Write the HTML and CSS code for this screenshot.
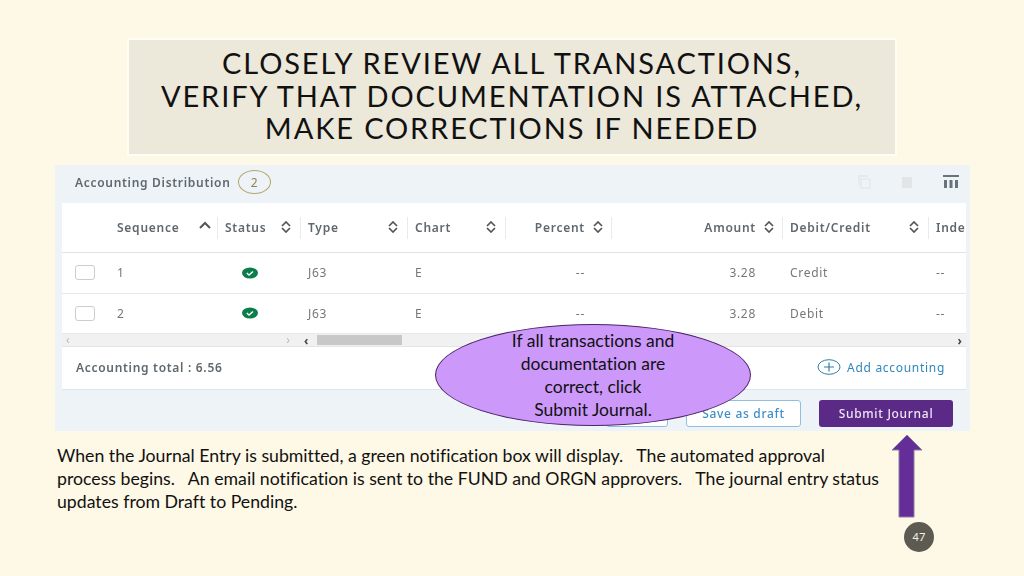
FILE: index.html
```html
<!DOCTYPE html>
<html lang="en">

<head>
	<meta charset="utf-8" />
	<title>Closely review all transactions</title>
	<link rel="stylesheet" href="styles.css">
</head>

<body>
	<div class="slide">
		<div class="title">
			<div>CLOSELY REVIEW ALL TRANSACTIONS,</div>
			<div>VERIFY THAT DOCUMENTATION IS ATTACHED,</div>
			<div>MAKE CORRECTIONS IF NEEDED</div>
		</div>

		<div class="panel">
			<div class="panel-head">
				<span class="panel-title">Accounting Distribution</span>
				<span class="count">2</span>
				<div class="tools">
					<svg width="16" height="16" viewBox="0 0 16 16" fill="none" stroke="#e3e7ea" stroke-width="1.4"><rect x="5" y="5" width="9" height="9"/><path d="M3 11V2h9"/></svg>
					<svg width="16" height="16" viewBox="0 0 16 16" fill="#e1e5e8"><rect x="3" y="3" width="10" height="11"/></svg>
					<svg width="18" height="16" viewBox="0 0 18 16" fill="#68737b"><rect x="1" y="1" width="16" height="2"/><rect x="2" y="6" width="3" height="8"/><rect x="7.5" y="6" width="3" height="8"/><rect x="13" y="6" width="3" height="8"/></svg>
				</div>
			</div>

			<div class="card">
				<div class="row row-head">
					<div class="cell"><span class="lbl seq">Sequence</span>
						<svg class="sort up" width="12" height="8" viewBox="0 0 12 8" fill="none" stroke="#555" stroke-width="2"><path d="M1 7l5-5 5 5"/></svg>
					</div>
					<div class="cell sep"><span class="lbl">Status</span><svg class="sort" width="12" height="12" viewBox="0 0 12 12" fill="none" stroke="#555" stroke-width="1.7"><path d="M2 5l4-4 4 4M2 7l4 4 4-4"/></svg></div>
					<div class="cell sep"><span class="lbl">Type</span><svg class="sort" width="12" height="12" viewBox="0 0 12 12" fill="none" stroke="#555" stroke-width="1.7"><path d="M2 5l4-4 4 4M2 7l4 4 4-4"/></svg></div>
					<div class="cell sep"><span class="lbl">Chart</span><svg class="sort" width="12" height="12" viewBox="0 0 12 12" fill="none" stroke="#555" stroke-width="1.7"><path d="M2 5l4-4 4 4M2 7l4 4 4-4"/></svg></div>
					<div class="cell sep end"><span class="lbl">Percent</span><svg class="sort near" width="12" height="12" viewBox="0 0 12 12" fill="none" stroke="#555" stroke-width="1.7"><path d="M2 5l4-4 4 4M2 7l4 4 4-4"/></svg></div>
					<div class="cell sep end"><span class="lbl">Amount</span><svg class="sort near" width="12" height="12" viewBox="0 0 12 12" fill="none" stroke="#555" stroke-width="1.7"><path d="M2 5l4-4 4 4M2 7l4 4 4-4"/></svg></div>
					<div class="cell sep"><span class="lbl">Debit/Credit</span><svg class="sort" width="12" height="12" viewBox="0 0 12 12" fill="none" stroke="#555" stroke-width="1.7"><path d="M2 5l4-4 4 4M2 7l4 4 4-4"/></svg></div>
					<div class="cell sep clip"><span class="lbl">Inde</span></div>
				</div>

				<div class="row row-body">
					<div class="cell"><span class="check"></span><span class="seq-num">1</span></div>
					<div class="cell center"><svg width="16" height="12" viewBox="0 0 16 12"><ellipse cx="8" cy="6" rx="8" ry="5.5" fill="#0b7d4b"/><path d="M4.8 6l2.2 2 4-3.6" fill="none" stroke="#fff" stroke-width="1.4"/></svg></div>
					<div class="cell">J63</div>
					<div class="cell">E</div>
					<div class="cell dash-pct">--</div>
					<div class="cell amount">3.28</div>
					<div class="cell">Credit</div>
					<div class="cell">--</div>
				</div>
				<div class="row row-body">
					<div class="cell"><span class="check"></span><span class="seq-num">2</span></div>
					<div class="cell center"><svg width="16" height="12" viewBox="0 0 16 12"><ellipse cx="8" cy="6" rx="8" ry="5.5" fill="#0b7d4b"/><path d="M4.8 6l2.2 2 4-3.6" fill="none" stroke="#fff" stroke-width="1.4"/></svg></div>
					<div class="cell">J63</div>
					<div class="cell">E</div>
					<div class="cell dash-pct">--</div>
					<div class="cell amount">3.28</div>
					<div class="cell">Debit</div>
					<div class="cell">--</div>
				</div>

				<div class="scroll">
					<div class="scroll-left">
						<span class="arrow faint">&lsaquo;</span>
						<span class="arrow faint">&rsaquo;</span>
					</div>
					<div class="scroll-right">
						<span class="arrow">&lsaquo;</span>
						<span class="thumb"></span>
						<span class="arrow end-arrow">&rsaquo;</span>
					</div>
				</div>

				<div class="card-foot">
					<span class="total">Accounting total : 6.56</span>
					<span class="add">
						<svg width="24" height="16" viewBox="0 0 24 16" fill="none" stroke="#2f7fa8" stroke-width="1"><ellipse cx="12" cy="8" rx="11" ry="7.3"/><path d="M12 3.5v9M7 8h10" stroke-width="1.2"/></svg>
						Add accounting
					</span>
				</div>
			</div>

			<div class="actions">
				<button class="btn btn-hidden"></button>
				<button class="btn">Save as draft</button>
				<button class="btn btn-primary">Submit Journal</button>
			</div>
		</div>

		<p class="note">When the Journal Entry is submitted, a green notification box will display.&nbsp;&nbsp; The automated approval<br>process begins.&nbsp;&nbsp; An email notification is sent to the FUND and ORGN approvers.&nbsp;&nbsp; The journal entry status<br>updates from Draft to Pending.</p>

		<div class="oval">If all transactions and<br>documentation are<br>correct, click<br>Submit Journal.</div>

		<svg class="up-arrow" width="34" height="84" viewBox="0 0 34 84"><path d="M17 1L32 16H24V83H9V16H2z" fill="#652d98" stroke="#8a7fa0" stroke-width="1"/></svg>

		<div class="page-num">47</div>
	</div>
</body>

</html>
```

FILE: styles.css
```css
body {
	margin: 0;
	background: #fef8e6;
}

.slide {
	position: relative;
	width: 1024px;
	height: 576px;
	overflow: hidden;
	padding-top: 38px;
	box-sizing: border-box;
	font-family: "Lato", "Liberation Sans", sans-serif;
	font-variant-ligatures: none;
	color: #111;
}

.title {
	width: 770px;
	height: 118px;
	box-sizing: border-box;
	margin-left: 127px;
	padding-top: 7px;
	border: 2px solid #fffdf6;
	background: #ece8da;
	text-align: center;
	font-size: 29px;
	line-height: 32.5px;
	letter-spacing: 1.87px;
}

.panel {
	width: 915px;
	height: 266px;
	margin: 9px 0 0 55px;
	background: #eef3f8;
	color: #5f686e;
	font-family: "Noto Sans", "Open Sans", sans-serif;
	font-size: 12px;
	filter: blur(0.35px);
}

.panel-head {
	display: flex;
	align-items: center;
	height: 38px;
	padding: 0 10px 4px 20px;
	box-sizing: border-box;
}

.panel-title {
	font-weight: 600;
	letter-spacing: 0.7px;
}

.count {
	display: flex;
	justify-content: center;
	align-items: center;
	width: 33px;
	height: 24px;
	margin-left: 7px;
	border: 1px solid #b5a76a;
	border-radius: 50%;
	box-sizing: border-box;
	color: #8c8454;
}

.tools {
	display: flex;
	gap: 27px;
	margin-left: auto;
}

.card {
	width: 904px;
	margin-left: 7px;
	background: #fff;
	border-bottom: 1px solid #dfe4e8;
}

.row {
	display: grid;
	grid-template-columns: 155px 83px 107px 98px 106px 171px 146px 38px;
}

.row-head {
	height: 50px;
	border-bottom: 1px solid #dfe3e6;
	box-sizing: border-box;
	font-weight: 600;
	letter-spacing: 0.75px;
}

.row-body {
	height: 40.5px;
	border-bottom: 1px solid #e6e9ec;
	box-sizing: border-box;
	letter-spacing: 0.7px;
	color: #777;
}

.cell {
	display: flex;
	align-items: center;
	position: relative;
	padding-left: 8px;
	white-space: nowrap;
	overflow: hidden;
}

.row-head .cell:first-child {
	padding-left: 55px;
}

.row-body .cell:first-child {
	padding-left: 13px;
}

.sep::before {
	content: "";
	position: absolute;
	left: 0;
	top: 14px;
	height: 22px;
	width: 1px;
	background: #e8ebee;
}

.sort {
	position: absolute;
	right: 8px;
	top: 18px;
}

.sort.up {
	right: 6px;
	top: 18px;
}

.end {
	justify-content: flex-end;
	padding-right: 26px;
}

.sort.near {
	right: 7px;
}

.check {
	width: 18px;
	height: 13px;
	border: 1px solid #c9ced3;
	border-radius: 3px;
}

.seq-num {
	margin-left: 22px;
}

.center {
	justify-content: center;
	padding: 0;
	margin-left: -17px;
}

.dash-pct {
	justify-content: flex-end;
	padding-right: 26px;
}

.amount {
	justify-content: flex-end;
	padding-right: 26px;
}

.scroll {
	display: flex;
	height: 13px;
	background: #f1f1f1;
	border-bottom: 1px solid #e3e5e7;
	box-sizing: border-box;
	font-size: 12px;
	line-height: 11px;
}

.scroll-left {
	display: flex;
	justify-content: space-between;
	width: 232px;
	padding: 0 4px;
	box-sizing: border-box;
}

.scroll-right {
	display: flex;
	flex: 1;
	align-items: center;
	padding-left: 10px;
}

.arrow {
	color: #444;
	font-weight: 700;
}

.faint {
	color: #bbb;
	font-weight: 400;
}

.thumb {
	width: 85px;
	height: 10px;
	margin-left: 9px;
	background: #c8c8c8;
}

.end-arrow {
	margin-left: auto;
	margin-right: 4px;
}

.card-foot {
	display: flex;
	justify-content: space-between;
	align-items: center;
	height: 42px;
	padding: 0 21px 2px 14px;
	box-sizing: border-box;
	font-weight: 600;
	letter-spacing: 0.7px;
}

.add {
	display: flex;
	align-items: center;
	gap: 6px;
	color: #2f86bd;
	font-weight: 400;
	letter-spacing: 0.7px;
}

.actions {
	display: flex;
	justify-content: flex-end;
	gap: 18px;
	padding: 10px 17px 0 0;
}

.btn {
	height: 27px;
	width: 115px;
	padding: 0;
	border: 1px solid #8fc0e4;
	border-radius: 3px;
	background: #fff;
	color: #3d8fc6;
	font-family: "Noto Sans", "Open Sans", sans-serif;
	font-size: 12px;
	font-weight: 500;
	letter-spacing: 0.7px;
}

.btn-hidden {
	width: 62px;
}

.btn-primary {
	width: 134px;
	border: 0;
	background: #5b2a86;
	color: #eee6f5;
}

.note {
	margin: 13px 0 0 57px;
	font-size: 17.7px;
	line-height: 23px;
	white-space: nowrap;
}

.oval {
	position: absolute;
	left: 435px;
	top: 324px;
	width: 316px;
	height: 102px;
	box-sizing: border-box;
	padding-top: 4px;
	border: 1px solid #4b2367;
	border-radius: 50%;
	background: #cc99fb;
	text-align: center;
	font-size: 17.5px;
	line-height: 23px;
}

.up-arrow {
	position: absolute;
	left: 890px;
	top: 434px;
}

.page-num {
	position: absolute;
	left: 904px;
	top: 522px;
	width: 30px;
	height: 30px;
	border-radius: 50%;
	background: #5d5a52;
	color: #f3f0e6;
	font-size: 11px;
	line-height: 30px;
	text-align: center;
}
```
